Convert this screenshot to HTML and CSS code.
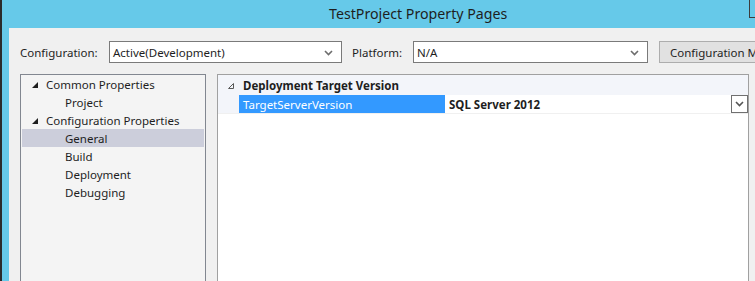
FILE: index.html
```html
<!DOCTYPE html>
<html lang="en">
<head>
    <meta charset="UTF-8">
    <title>TestProject Property Pages</title>
    <link rel="stylesheet" href="styles.css">
</head>
<body>
    <div class="window">
        <div class="titlebar">
            <span class="title">TestProject Property Pages</span>
            <span class="close-edge"></span>
        </div>
        <div class="content">
            <div class="config-row">
                <label class="label label-config">Configuration:</label>
                <div class="combo combo-config">
                    <span>Active(Development)</span>
                    <svg class="chevron" width="9" height="6" viewBox="0 0 9 6"><path d="M1 1 L4.5 4.5 L8 1" fill="none" stroke="#6d6d6d" stroke-width="1.6"/></svg>
                </div>
                <label class="label label-platform">Platform:</label>
                <div class="combo combo-platform">
                    <span>N/A</span>
                    <svg class="chevron" width="9" height="6" viewBox="0 0 9 6"><path d="M1 1 L4.5 4.5 L8 1" fill="none" stroke="#6d6d6d" stroke-width="1.6"/></svg>
                </div>
                <button class="btn">Configuration M</button>
            </div>

            <div class="panels">
                <div class="tree">
                    <div class="tree-row">
                        <svg class="expander" width="6" height="6" viewBox="0 0 6 6"><polygon points="6,0 6,6 0,6" fill="#1e1e1e"/></svg>
                        Common Properties
                    </div>
                    <div class="tree-row child">Project</div>
                    <div class="tree-row">
                        <svg class="expander" width="6" height="6" viewBox="0 0 6 6"><polygon points="6,0 6,6 0,6" fill="#1e1e1e"/></svg>
                        Configuration Properties
                    </div>
                    <div class="tree-row child selected">General</div>
                    <div class="tree-row child">Build</div>
                    <div class="tree-row child">Deployment</div>
                    <div class="tree-row child">Debugging</div>
                </div>

                <div class="grid">
                    <div class="grid-category">
                        <svg class="cat-expander" width="6" height="6" viewBox="0 0 6 6"><polygon points="5.5,0.5 5.5,5.5 0.5,5.5" fill="none" stroke="#595959" stroke-width="1"/></svg>
                        <span>Deployment Target Version</span>
                    </div>
                    <div class="grid-row">
                        <div class="gutter"></div>
                        <div class="prop-name">TargetServerVersion</div>
                        <div class="prop-value">
                            <span>SQL Server 2012</span>
                            <span class="drop-btn">
                                <svg width="9" height="6" viewBox="0 0 9 6"><path d="M1 1 L4.5 4.5 L8 1" fill="none" stroke="#555" stroke-width="1.6"/></svg>
                            </span>
                        </div>
                    </div>
                </div>
            </div>
        </div>
    </div>
</body>
</html>
```

FILE: styles.css
```css
html, body {
    margin: 0;
    padding: 0;
}
body {
    width: 755px;
    height: 281px;
    overflow: hidden;
    background: #2b2b2b;
    font-family: "Noto Sans", "Open Sans", sans-serif;
    font-size: 11.5px;
    color: #1e1e1e;
}
.window {
    margin-left: 2px;
    height: 281px;
    background: #66c9e9;
    display: flex;
    flex-direction: column;
}
.titlebar {
    height: 28px;
    flex-shrink: 0;
    display: flex;
    align-items: flex-start;
    position: relative;
}
.title {
    margin-left: 327px;
    margin-top: 4px;
    font-size: 14.2px;
    color: #1e1e1e;
    white-space: nowrap;
}
.close-edge {
    position: absolute;
    left: 747px;
    top: 0;
    width: 8px;
    height: 17px;
    border-left: 1px solid #3c3c3c;
    border-bottom: 1px solid #3c3c3c;
}
.content {
    flex: 1;
    margin-left: 7px;
    background: #f0f0f0;
    overflow: hidden;
}
.config-row {
    display: flex;
    align-items: center;
    height: 22px;
    margin-top: 13px;
    padding-left: 11px;
    white-space: nowrap;
}
.config-row > * {
    flex-shrink: 0;
}
.label {
    padding-top: 1px;
}
.label-config {
    width: 89px;
}
.label-platform {
    width: 61px;
    margin-left: 10px;
}
.combo {
    height: 22px;
    border: 1px solid #7a7a7a;
    background: #fff;
    display: flex;
    align-items: center;
    justify-content: space-between;
    padding: 1px 8px 0 3px;
    box-sizing: border-box;
}
.combo-config {
    width: 233px;
}
.combo-platform {
    width: 235px;
}
.btn {
    margin-left: 11px;
    height: 22px;
    width: 110px;
    border: 1px solid #adadad;
    background: #e1e1e1;
    font-family: inherit;
    font-size: 11.5px;
    color: #1e1e1e;
    text-align: left;
    padding: 1px 0 0 10px;
    white-space: nowrap;
    overflow: hidden;
}
.panels {
    display: flex;
    gap: 11px;
    margin-top: 11px;
    padding-left: 11px;
    height: 220px;
}
.tree {
    width: 186px;
    flex-shrink: 0;
    box-sizing: border-box;
    border: 1px solid #828790;
    border-bottom: none;
    background: #f4f4f4;
    padding: 0 1px;
}
.tree-row {
    height: 18px;
    display: flex;
    align-items: center;
    padding-left: 24px;
    white-space: nowrap;
}
.expander {
    margin-left: -14px;
    margin-right: 8px;
    margin-top: 1px;
}
.tree-row.child {
    padding-left: 43px;
}
.tree-row.selected {
    background: #cccedb;
}
.grid {
    width: 532px;
    flex-shrink: 0;
    box-sizing: border-box;
    border: 1px solid #a0a0a0;
    border-bottom: none;
    background: #fff;
}
.grid-category {
    height: 20px;
    background: #f3f5fa;
    display: flex;
    align-items: center;
    font-weight: bold;
    padding-left: 10px;
}
.cat-expander {
    margin-right: 9px;
    margin-top: 2px;
}
.grid-row {
    display: flex;
    height: 18px;
    border-bottom: 1px solid #f0f0f0;
}
.gutter {
    width: 21px;
    background: #f3f5fa;
}
.prop-name {
    width: 206px;
    background: #3399ff;
    color: #fff;
    padding-left: 4px;
    box-sizing: border-box;
    display: flex;
    align-items: center;
}
.prop-value {
    flex: 1;
    display: flex;
    align-items: center;
    justify-content: space-between;
    font-weight: bold;
    padding-left: 4px;
}
.drop-btn {
    width: 17px;
    height: 18px;
    box-sizing: border-box;
    border: 1px solid #707070;
    background: #fff;
    display: flex;
    align-items: center;
    justify-content: center;
}
```
